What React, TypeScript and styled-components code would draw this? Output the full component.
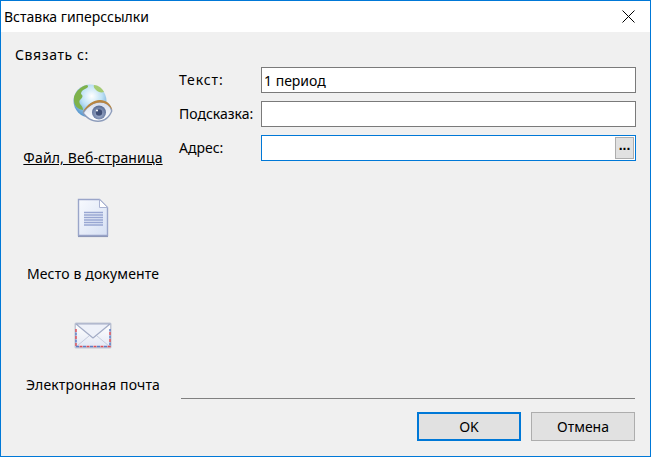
import styled, { createGlobalStyle } from "styled-components";

const GlobalStyle = createGlobalStyle`
  html, body {
    margin: 0;
    padding: 0;
    background: #f0f0f0;
  }
  * {
    box-sizing: border-box;
  }
`;

const GlobeIcon = () => (
  <svg width="40" height="38" viewBox="0 0 40 38">
    <defs>
      <radialGradient id="sea" cx="0.55" cy="0.35" r="0.7">
        <stop offset="0" stopColor="#ffffff" />
        <stop offset="0.45" stopColor="#bfe2f5" />
        <stop offset="1" stopColor="#4a8dc9" />
      </radialGradient>
      <linearGradient id="lens" x1="0" y1="0" x2="0" y2="1">
        <stop offset="0" stopColor="#d5dcec" />
        <stop offset="1" stopColor="#ffffff" />
      </linearGradient>
      <radialGradient id="iris" cx="0.5" cy="0.6" r="0.55">
        <stop offset="0" stopColor="#aebcd9" />
        <stop offset="1" stopColor="#5d6f96" />
      </radialGradient>
      <filter id="soft1">
        <feGaussianBlur stdDeviation="0.45" />
      </filter>
    </defs>
    <g filter="url(#soft1)">
      <circle cx="17" cy="17" r="16.500" fill="url(#sea)" />
      <path d="M1 13C3 7 8 2 14 1c2 1 1 3-2 4-3 1-4 3-4 5 2 1 2 3 0 5-2 1-2 3-1 5 2 2 3 4 3 6C4 25 0 21 1 13z" fill="#7eb24c" />
      <path d="M21 1c4 0 8 3 10 7-3 1-6 0-8-2-1-1-3-3-2-5z" fill="#a5cb72" />
      <path d="M9.500 29C14 20 21 16.500 27 16.500S37.500 20 39.500 27C37 33.500 32 38 25 38 18 38 13 34.500 9.500 29z" fill="#8d9cbb" />
      <path d="M11 29c4-6.500 10-10.500 16-10.500s9.500 3 11 8.500C36 32.500 31 36.500 25 36.500c-6 0-10.500-3-14-7.500z" fill="url(#lens)" />
      <path d="M9.500 28.500C14 20 21 16 27 16c6 0 10.500 3.500 12.500 10-3-4.500-7-7.500-12.500-7.500-6 0-11.500 4-17.500 10z" fill="#b9853f" />
      <circle cx="26" cy="28.500" r="7" fill="url(#iris)" />
      <circle cx="26" cy="28.500" r="3.200" fill="#404f77" />
      <circle cx="24" cy="26.500" r="1" fill="#ffffff" />
    </g>
  </svg>
);

const DocumentIcon = () => (
  <svg width="34" height="42" viewBox="0 0 34 42">
    <defs>
      <linearGradient id="page" x1="0" y1="0" x2="1" y2="1">
        <stop offset="0" stopColor="#f8fafe" />
        <stop offset="1" stopColor="#d6e0f4" />
      </linearGradient>
      <filter id="soft2">
        <feGaussianBlur stdDeviation="0.4" />
      </filter>
    </defs>
    <g filter="url(#soft2)">
      <path d="M2.500 2.500h21l8 8v28h-29z" fill="url(#page)" stroke="#9aa5c9" strokeWidth="1.400" />
      <path d="M2 39.500h30" stroke="#8d97b8" strokeWidth="1.200" />
      <path d="M23.500 2.500v8h8z" fill="#ffffff" stroke="#aab3d2" strokeWidth="1" />
      <path d="M8 15.500h19M8 18h19M8 20.500h19M8 23h19M8 25.500h19M8 28h19" stroke="#98a6d2" strokeWidth="1.500" />
    </g>
  </svg>
);

const MailIcon = () => (
  <svg width="38" height="27" viewBox="0 0 38 27">
    <defs>
      <linearGradient id="paper" x1="0" y1="0" x2="0" y2="1">
        <stop offset="0" stopColor="#ffffff" />
        <stop offset="1" stopColor="#e3e8f4" />
      </linearGradient>
      <filter id="soft3">
        <feGaussianBlur stdDeviation="0.3" />
      </filter>
    </defs>
    <g filter="url(#soft3)">
      <rect x="0.500" y="0.500" width="37" height="26" rx="1.500" fill="#c0c6d6" />
      <rect x="2" y="2" width="34" height="23" fill="url(#paper)" />
      <path d="M3 24l12-10M35 24L23 14" stroke="#c6cddf" strokeWidth="1" fill="none" />
      <path d="M2 2l17 14L36 2z" fill="#eef1f9" stroke="#a3acc6" strokeWidth="1.200" strokeLinejoin="round" />
      <path d="M2 7v17.500h34V7" stroke="#dc4f58" strokeWidth="1.500" strokeDasharray="3 4" fill="none" />
      <path d="M2 7v17.500h34V7" stroke="#5f7cc4" strokeWidth="1.500" strokeDasharray="3 4" strokeDashoffset="3.500" fill="none" />
    </g>
  </svg>
);

const links = [
  { label: "Файл, Веб-страница", icon: <GlobeIcon />, gap: 26, top: 19, active: true },
  { label: "Место в документе", icon: <DocumentIcon />, gap: 25, top: 29, active: false },
  { label: "Электронная почта", icon: <MailIcon />, gap: 26, top: 38, active: false },
];

export default function App() {
  return (
    <>
      <GlobalStyle />
      <Window>
        <TitleBar>
          <Title>Вставка гиперссылки</Title>
          <CloseButton aria-label="Закрыть">
            <svg width="13" height="13" viewBox="0 0 13 13">
              <path d="M0.5 0.5l12 12M12.5 0.5l-12 12" stroke="#000" strokeWidth="1" fill="none" />
            </svg>
          </CloseButton>
        </TitleBar>
        <Body>
          <Sidebar>
            <SidebarLabel>Связать с:</SidebarLabel>
            {links.map((link) => (
              <LinkItem key={link.label} $top={link.top}>
                {link.icon}
                <LinkText $gap={link.gap} $active={link.active}>
                  {link.label}
                </LinkText>
              </LinkItem>
            ))}
          </Sidebar>
          <Main>
            <Fields>
              <FieldRow>
                <FieldLabel $spacing={0.9}>Текст:</FieldLabel>
                <TextInput defaultValue="1 период" />
              </FieldRow>
              <FieldRow>
                <FieldLabel>Подсказка:</FieldLabel>
                <TextInput />
              </FieldRow>
              <FieldRow>
                <FieldLabel>Адрес:</FieldLabel>
                <AddressBox>
                  <AddressInput />
                  <BrowseButton>...</BrowseButton>
                </AddressBox>
              </FieldRow>
            </Fields>
            <Separator />
            <Buttons>
              <DialogButton $primary>OK</DialogButton>
              <DialogButton>Отмена</DialogButton>
            </Buttons>
          </Main>
        </Body>
      </Window>
    </>
  );
}

const Window = styled.div`
  width: 651px;
  height: 457px;
  display: flex;
  flex-direction: column;
  border: 1px solid #0078d7;
  background: #f0f0f0;
  color: #000;
  font-family: "Noto Sans", "Open Sans", sans-serif;
  font-size: 14px;
`;

const TitleBar = styled.div`
  height: 31px;
  flex: none;
  display: flex;
  align-items: center;
  justify-content: space-between;
  background: #fff;
  padding: 0 15px 0 3px;
`;

const Title = styled.span`
  line-height: 20px;
`;

const CloseButton = styled.button`
  display: flex;
  padding: 0;
  border: 0;
  background: none;
`;

const Body = styled.div`
  flex: 1;
  min-height: 0;
  display: flex;
`;

const Sidebar = styled.div`
  width: 178px;
  flex: none;
  display: flex;
  flex-direction: column;
  align-items: center;
  padding: 13px 0 0 6px;
`;

const SidebarLabel = styled.div`
  align-self: flex-start;
  margin-left: 8px;
  line-height: 20px;
  letter-spacing: 0.6px;
`;

const LinkItem = styled.div<{ $top: number }>`
  display: flex;
  flex-direction: column;
  align-items: center;
  margin-top: ${(props) => props.$top}px;

  > svg {
    display: block;
  }
`;

const LinkText = styled.span<{ $gap: number; $active: boolean }>`
  margin-top: ${(props) => props.$gap}px;
  line-height: 20px;
  white-space: nowrap;
  letter-spacing: 0.15px;
  text-decoration: ${(props) => (props.$active ? "underline" : "none")};
`;

const Main = styled.div`
  flex: 1;
  min-width: 0;
  display: flex;
  flex-direction: column;
  padding: 35px 14px 15px 0;
`;

const Fields = styled.div`
  display: flex;
  flex-direction: column;
  gap: 8px;
`;

const FieldRow = styled.div`
  display: flex;
  align-items: flex-start;
`;

const FieldLabel = styled.label<{ $spacing?: number }>`
  width: 82px;
  flex: none;
  line-height: 26px;
  letter-spacing: ${(props) => props.$spacing ?? 0}px;
`;

const TextInput = styled.input`
  flex: 1;
  min-width: 0;
  height: 26px;
  border: 1px solid #7a7a7a;
  background: #fff;
  padding: 0 2px;
  font: inherit;
  outline: none;
`;

const AddressBox = styled.div`
  flex: 1;
  min-width: 0;
  height: 26px;
  display: flex;
  align-items: center;
  justify-content: flex-end;
  border: 1px solid #0078d7;
  background: #fff;
  padding-right: 1px;
`;

const AddressInput = styled.input`
  flex: 1;
  min-width: 0;
  height: 100%;
  border: 0;
  background: none;
  outline: none;
`;

const BrowseButton = styled.button`
  width: 19px;
  height: 22px;
  flex: none;
  padding: 0 0 7px;
  border: 1px solid #adadad;
  background: #e1e1e1;
  font-family: "Liberation Sans", sans-serif;
  font-size: 14px;
  font-weight: 700;
  line-height: 12px;
  letter-spacing: 0;
`;

const Separator = styled.div`
  height: 1px;
  margin: auto 1px 13px 2px;
  background: #808080;
`;

const Buttons = styled.div`
  display: flex;
  justify-content: flex-end;
  gap: 10px;
  padding-right: 1px;
`;

const DialogButton = styled.button<{ $primary?: boolean }>`
  width: 104px;
  height: 29px;
  padding: 0;
  border: ${(props) => (props.$primary ? "2px solid #0078d7" : "1px solid #adadad")};
  background: #e1e1e1;
  font: inherit;
  color: #000;
`;
